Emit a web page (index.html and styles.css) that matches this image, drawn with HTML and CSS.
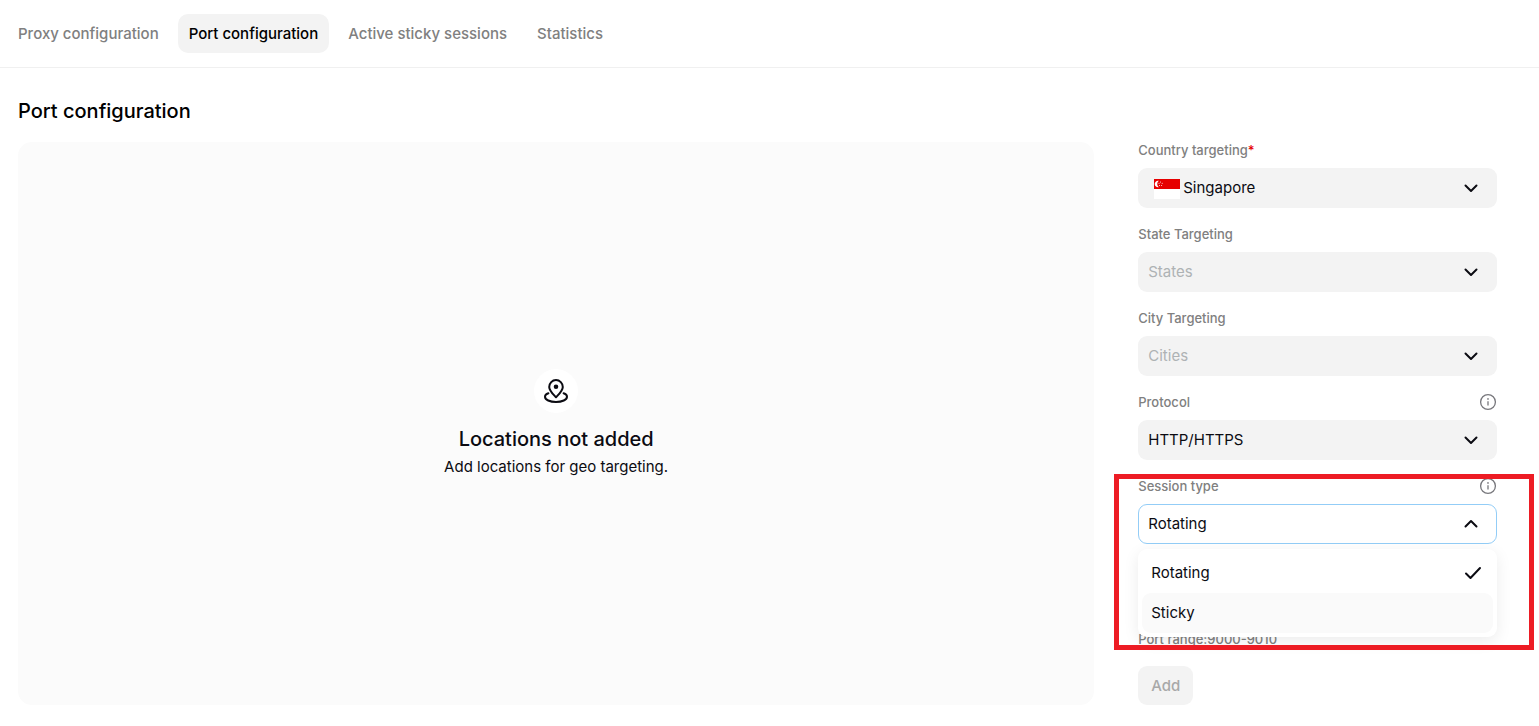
FILE: index.html
```html
<!DOCTYPE html>
<html lang="en">
<head>
<meta charset="utf-8">
<title>Port configuration</title>
<link rel="stylesheet" href="styles.css">
</head>
<body>
<svg class="sprite" aria-hidden="true">
  <symbol id="chevron" viewBox="0 0 16 16"><path d="M2.500 5.500 8 11l5.500-5.500" fill="none" stroke="currentColor" stroke-width="2" stroke-linecap="round" stroke-linejoin="round"/></symbol>
  <symbol id="info" viewBox="0 0 18 18"><circle cx="9" cy="9" r="7.400" fill="none" stroke="currentColor" stroke-width="1.300"/><path d="M9 8.200v4.300" fill="none" stroke="currentColor" stroke-width="1.300"/><circle cx="9" cy="5.900" r=".85" fill="currentColor"/></symbol>
</svg>
<nav class="tabs">
  <a class="tab" href="#proxy">Proxy configuration</a>
  <a class="tab tab-active" href="#port" aria-current="page">Port configuration</a>
  <a class="tab" href="#sessions">Active sticky sessions</a>
  <a class="tab" href="#statistics">Statistics</a>
</nav>
<main class="page">
  <h1 class="title">Port configuration</h1>
  <div class="columns">
    <section class="empty">
      <span class="empty-icon">
        <svg width="28" height="28" viewBox="0 0 28 28" fill="none" stroke="currentColor" stroke-width="2" stroke-linecap="round" stroke-linejoin="round" aria-hidden="true">
          <path d="M14 20.300c-3.200-3.400-6.800-6.700-6.800-10.400a6.800 6.800 0 0 1 13.600 0c0 3.700-3.600 7-6.800 10.400Z"/>
          <circle cx="14" cy="9.800" r="1.300" fill="currentColor"/>
          <path d="M6.400 16.300C4.200 17.100 3 18.300 3 19.700c0 3.100 4.900 5.300 11 5.300s11-2.200 11-5.300c0-1.400-1.200-2.600-3.400-3.400"/>
        </svg>
      </span>
      <h2 class="empty-title">Locations not added</h2>
      <p class="empty-text">Add locations for geo targeting.</p>
    </section>
    <form class="form">
      <div class="field">
        <div class="field-head"><label for="country">Country targeting<span class="required">*</span></label></div>
        <div class="control">
          <svg class="flag" width="26" height="20" viewBox="0 0 26 20" aria-hidden="true">
            <path d="M0 0h26v20H0z" fill="#fff"/><path d="M0 0h26v10H0z" fill="#e60000"/>
            <path d="M4.800 1.800a3.300 3.300 0 1 0 0 6.400 4 4 0 0 1 0-6.400Z" fill="#fff"/>
            <g fill="#fff"><circle cx="6.500" cy="3" r=".5"/><circle cx="8.200" cy="4.300" r=".5"/><circle cx="7.600" cy="6.500" r=".5"/><circle cx="5.500" cy="6.500" r=".5"/><circle cx="5" cy="4.300" r=".5"/></g>
          </svg>
          <select class="select select-flag" id="country"><option>Singapore</option></select>
          <svg class="chevron" aria-hidden="true"><use href="#chevron"/></svg>
        </div>
      </div>
      <div class="field">
        <div class="field-head"><label for="state">State Targeting</label></div>
        <div class="control">
          <select class="select select-empty" id="state"><option>States</option></select>
          <svg class="chevron" aria-hidden="true"><use href="#chevron"/></svg>
        </div>
      </div>
      <div class="field">
        <div class="field-head"><label for="city">City Targeting</label></div>
        <div class="control">
          <select class="select select-empty" id="city"><option>Cities</option></select>
          <svg class="chevron" aria-hidden="true"><use href="#chevron"/></svg>
        </div>
      </div>
      <div class="field">
        <div class="field-head"><label for="protocol">Protocol</label><button class="info" type="button" aria-label="About protocol"><svg width="18" height="18" aria-hidden="true"><use href="#info"/></svg></button></div>
        <div class="control">
          <select class="select" id="protocol"><option>HTTP/HTTPS</option></select>
          <svg class="chevron" aria-hidden="true"><use href="#chevron"/></svg>
        </div>
      </div>
      <div class="field">
        <div class="field-head"><label for="session">Session type</label><button class="info" type="button" aria-label="About session type"><svg width="18" height="18" aria-hidden="true"><use href="#info"/></svg></button></div>
        <div class="control">
          <button class="select select-open" id="session" type="button" aria-haspopup="listbox" aria-expanded="true" aria-controls="session-list">Rotating</button>
          <svg class="chevron chevron-up" aria-hidden="true"><use href="#chevron"/></svg>
          <ul class="menu" id="session-list" role="listbox">
            <li class="option" role="option" aria-selected="true">Rotating
              <svg width="18" height="14" viewBox="0 0 18 14" fill="none" stroke="currentColor" stroke-width="2" stroke-linecap="round" stroke-linejoin="round" aria-hidden="true"><path d="m2 7.500 4.500 4.500L16 2"/></svg>
            </li>
            <li class="option option-hover" role="option" aria-selected="false">Sticky</li>
          </ul>
        </div>
        <div class="highlight"></div>
      </div>
      <p class="hint">Port range:9000-9010</p>
      <button class="add" type="button" disabled>Add</button>
    </form>
  </div>
</main>
</body>
</html>
```
FILE: styles.css
```css
* { box-sizing: border-box; }
body {
  margin: 0;
  background: #fff;
  color: #0b0b12;
  font-family: Inter, "Liberation Sans", sans-serif;
  font-size: 15px;
  line-height: 20px;
}
h1, h2, p, ul { margin: 0; padding: 0; }
button, select { font: inherit; color: inherit; border: 0; }
svg { display: block; }
.sprite { position: absolute; width: 0; height: 0; }

.tabs {
  display: flex;
  gap: 8px;
  padding: 14px 7px;
  border-bottom: 1px solid #f0f0f0;
}
.tab {
  padding: 9px 11px;
  border-radius: 10px;
  color: #808080;
  font-weight: 500;
  line-height: 21px;
  text-decoration: none;
}
.tab-active { background: #f3f3f3; color: #000; }

.page { padding: 28px 42px 20px 18px; }
.title { font-size: 20px; font-weight: 500; line-height: 30px; color: #000; }
.columns {
  display: grid;
  grid-template-columns: 3fr 1fr;
  gap: 44px;
  margin-top: 16px;
}
.empty {
  display: flex;
  flex-direction: column;
  align-items: center;
  justify-content: center;
  border-radius: 14px;
  background: #fbfbfb;
}
.empty-icon {
  display: grid;
  place-items: center;
  width: 44px;
  height: 44px;
  border-radius: 50%;
  background: #fff;
}
.empty-title { margin-top: 10px; font-size: 20px; font-weight: 500; line-height: 32px; }
.empty-text { line-height: 24px; }

.form { display: flex; flex-direction: column; align-items: stretch; }
.field { position: relative; margin-bottom: 18px; }
.field-head {
  display: flex;
  align-items: center;
  justify-content: space-between;
  height: 16px;
  margin-bottom: 10px;
  color: #808080;
  font-size: 13px;
  font-weight: 500;
  line-height: 18px;
}
.required { color: #e60000; }
.info { padding: 0; background: none; color: #77777c; }
.control { position: relative; }
.select {
  display: block;
  width: 100%;
  height: 40px;
  padding: 0 40px 0 10px;
  border-radius: 9px;
  background: #f3f3f3;
  text-align: left;
  appearance: none;
}
.select-flag { padding-left: 45px; }
.select-empty { color: #aeb2b4; }
.select-open { border: 1px solid #93cdf7; background: #fff; padding-left: 9px; }
.flag { position: absolute; left: 16px; top: 11px; }
.chevron {
  position: absolute;
  right: 18px;
  top: 12px;
  width: 16px;
  height: 16px;
  pointer-events: none;
}
.chevron-up { transform: rotate(180deg); }

.menu {
  position: absolute;
  z-index: 1;
  top: 45px;
  left: 0;
  right: 0;
  padding: 4px;
  border-radius: 9px;
  background: #fff;
  box-shadow: 0 4px 16px rgba(0, 0, 0, 0.08);
  list-style: none;
}
.option {
  display: flex;
  align-items: center;
  justify-content: space-between;
  height: 40px;
  padding: 0 11px 0 9px;
  border-radius: 9px;
}
.option-hover { background: #fafafa; }
.highlight {
  position: absolute;
  z-index: 2;
  top: -4px;
  left: -24px;
  right: -37px;
  height: 176px;
  border: 5px solid #ed1c24;
  pointer-events: none;
}
.hint {
  margin-top: 68px;
  color: #808080;
  font-size: 13px;
  font-weight: 500;
  line-height: 18px;
}
.add {
  align-self: flex-start;
  height: 39px;
  margin-top: 18px;
  padding: 0 13px;
  border-radius: 9px;
  background: #f3f3f3;
  color: #a8a8a8;
  font-weight: 500;
}
```
